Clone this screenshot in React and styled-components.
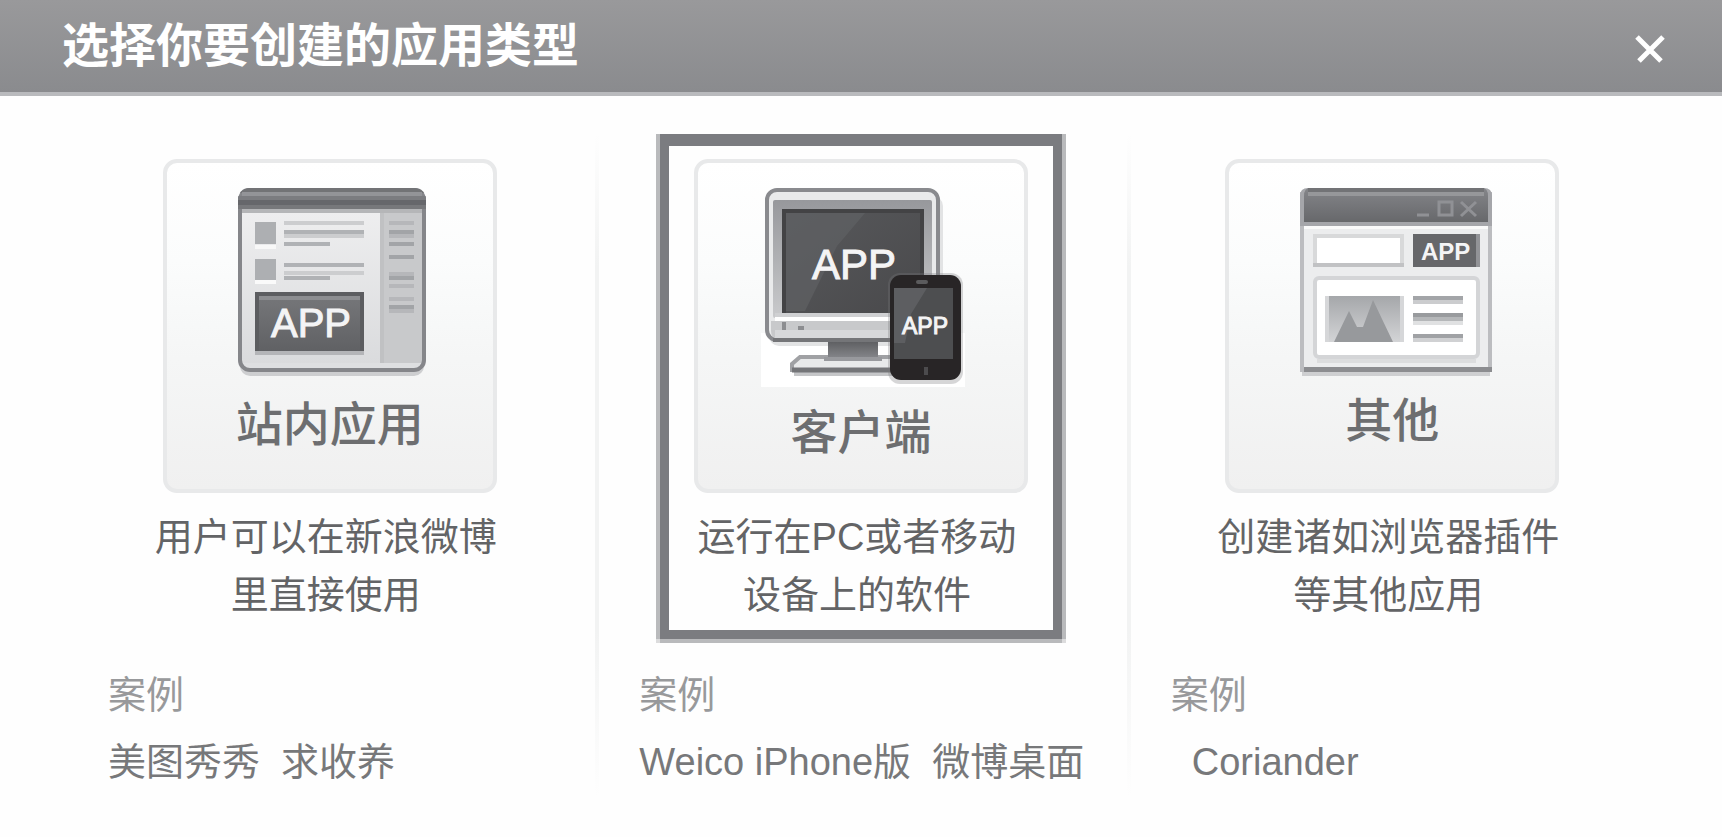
import React, { useState } from "react";
import styled, { createGlobalStyle } from "styled-components";

const GlobalStyle = createGlobalStyle`
  *, *::before, *::after { box-sizing: border-box; }
  body {
    margin: 0;
    background: #fefefe;
    font-family: "Liberation Sans", "Noto Sans CJK SC", sans-serif;
  }
`;

const Dialog = styled.main`
  width: 100%;
`;

const Header = styled.header`
  display: flex;
  align-items: center;
  justify-content: space-between;
  height: 96px;
  padding: 0 57px 0 62px;
  border-bottom: 4px solid #b9babd;
  background: linear-gradient(#99999b, #8a8b8e);
`;

const Title = styled.h1`
  margin: 0;
  color: #ffffff;
  font-size: 47px;
  font-weight: 700;
  line-height: 60px;
  white-space: nowrap;
`;

const CloseButton = styled.button`
  display: flex;
  margin: 4px 0 0;
  padding: 0;
  border: 0;
  background: none;
  cursor: pointer;
`;

const Columns = styled.div`
  display: grid;
  grid-template-columns: repeat(3, minmax(0, 1fr));
  padding: 38px 64px 40px;
`;

const Column = styled.section`
  display: flex;
  flex-direction: column;
  align-items: center;

  & + & {
    background: linear-gradient(#fefefe, #f2f3f3 20%, #f2f3f3 75%, #fefefe) left / 4px 100% no-repeat;
  }
`;

const Choice = styled.button`
  width: 402px;
  margin: 0;
  padding: 13px 0 6px;
  border: 9px solid ${(p) => (p.$selected ? "#7b7c80" : "transparent")};
  border-top-width: 12px;
  background: none;
  box-shadow: ${(p) =>
    p.$selected ? "-4px 0 #b9babc, 4px 0 #b9babc, 0 4px #b9babc, 4px 4px #dcdcdd, -4px 4px #dcdcdd" : "none"};
  font-family: inherit;
  cursor: pointer;
`;

const Card = styled.span`
  display: flex;
  flex-direction: column;
  align-items: center;
  gap: 14px;
  width: 334px;
  height: 334px;
  margin: 0 auto;
  padding-top: 25px;
  border: 4px solid #e8e9ea;
  border-radius: 14px;
  background: linear-gradient(#ffffff, #fbfcfc 30%, #f5f6f6 60%, #f0f0f0);
`;

const CardName = styled.span`
  color: #6d6e70;
  font-size: 47px;
  font-weight: 500;
  line-height: 62px;
`;

const Description = styled.span`
  display: block;
  margin-top: 15px;
  padding-right: 8px;
  color: #636466;
  font-size: 38px;
  line-height: 58px;
  white-space: pre-line;
`;

const Cases = styled.dl`
  align-self: stretch;
  margin: 23px 0 0;
  padding-left: 44px;
  font-size: 38px;
  line-height: 67px;
  white-space: pre;
`;

const CasesLabel = styled.dt`
  color: #98999b;
`;

const CasesText = styled.dd`
  margin: 0;
  color: #77787a;
`;

const IconLabel = styled.text`
  fill: #f4f4f5;
  stroke: #f4f4f5;
  stroke-width: ${(p) => (p.$bold ? 0 : 1)};
  font-family: "Liberation Sans", sans-serif;
  font-size: ${(p) => p.$size}px;
  font-weight: ${(p) => (p.$bold ? 700 : 400)};
`;

function Bars({ x, width, rows }) {
  return rows.map(([y, tone, w]) => (
    <rect key={y} x={x} y={y} width={w || width} height="4" fill={tone} />
  ));
}

function SiteIcon() {
  const d = "#b0b2b5";
  const l = "#cccdcf";
  const s = "#a2a4a7";
  const m = "#b6b7ba";
  return (
    <svg width="208" height="192" viewBox="0 0 208 192" aria-hidden="true">
      <defs>
        <linearGradient id="siteBody" x1="0" y1="0" x2="0" y2="1">
          <stop offset="0" stopColor="#f1f1f2" />
          <stop offset="1" stopColor="#d9dadc" />
        </linearGradient>
        <linearGradient id="siteBtn" x1="0" y1="0" x2="0" y2="1">
          <stop offset="0" stopColor="#77787b" />
          <stop offset="1" stopColor="#606164" />
        </linearGradient>
        <clipPath id="siteClip"><rect x="12" y="0" width="188" height="184" rx="11" /></clipPath>
      </defs>
      <rect x="14" y="6" width="184" height="182" rx="10" fill="#cdced0" />
      <g clipPath="url(#siteClip)">
        <rect x="12" width="188" height="184" fill="url(#siteBody)" />
        <rect x="154" y="20" width="44" height="155" fill="#c8c9cb" />
        <rect x="154" y="20" width="4" height="155" fill="#c0c1c3" />
        <rect x="16" y="175" width="180" height="5" fill="#dedfe1" />
      </g>
      <rect x="14" y="2" width="184" height="180" rx="10" fill="none" stroke="#85868a" strokeWidth="4" />
      <g clipPath="url(#siteClip)">
        <rect x="12" width="188" height="5" fill="#727376" />
        <rect x="16" y="4" width="180" height="5" fill="#939498" />
        <rect x="12" y="8" width="188" height="4" fill="#7b7c80" />
        <rect x="12" y="12" width="188" height="5" fill="#66676b" />
        <rect x="12" y="17" width="188" height="4" fill="#77787b" />
        <rect x="16" y="21" width="180" height="4" fill="#b5b6b8" />
      </g>
      <rect x="29" y="57" width="21" height="4" fill="#f8f8f8" />
      <rect x="29" y="34" width="21" height="22" fill="#adafb2" />
      <rect x="29" y="91" width="21" height="5" fill="#fafafa" />
      <rect x="29" y="71" width="21" height="21" fill="#adafb2" />
      <Bars x={58} width={80} rows={[[33, l], [42, d], [46, l], [54, d, 46], [75, d], [83, l], [88, d, 46]]} />
      <Bars x={163} width={25} rows={[[33, m], [42, s], [46, m], [54, s], [67, s], [84, m], [88, s], [96, m], [109, m], [117, s], [121, m]]} />
      <rect x="29" y="163" width="109" height="4" fill="#b4b5b8" />
      <rect x="29" y="104" width="109" height="59" rx="2" fill="url(#siteBtn)" />
      <rect x="33" y="108" width="101" height="4" fill="#8c8d90" />
      <path d="M31 163V106H136V163" fill="none" stroke="#5c5d60" strokeWidth="4" />
      <IconLabel x="45" y="149" $size={40}>APP</IconLabel>
    </svg>
  );
}

function ClientIcon() {
  return (
    <svg width="208" height="200" viewBox="0 0 208 200" aria-hidden="true">
      <defs>
        <linearGradient id="bezel" x1="0" y1="0" x2="0" y2="1">
          <stop offset="0" stopColor="#97989c" />
          <stop offset="1" stopColor="#c9cacc" />
        </linearGradient>
        <linearGradient id="screen" x1="0" y1="0" x2="1" y2="1">
          <stop offset="0" stopColor="#58595c" />
          <stop offset="1" stopColor="#49494b" />
        </linearGradient>
        <linearGradient id="neck" x1="0" y1="0" x2="0" y2="1">
          <stop offset="0" stopColor="#5f6063" />
          <stop offset="1" stopColor="#85868a" />
        </linearGradient>
      </defs>
      <path d="M4 145H208V199H4Z" fill="#ffffff" />
      <rect x="12" y="8" width="174" height="150" rx="10" fill="#e2e3e4" />
      <rect x="10" y="2" width="171" height="150" rx="10" fill="#e9eaeb" stroke="#898a8e" strokeWidth="4" />
      <rect x="16" y="12" width="159" height="118" rx="2" fill="url(#bezel)" />
      <rect x="25" y="21" width="142" height="104" fill="url(#screen)" />
      <path d="M29 25H108L80 58L48 123H29Z" fill="#606164" opacity="0.7" />
      <path d="M27 125V23H165V125" fill="none" stroke="#434345" strokeWidth="4" />
      <rect x="18" y="125" width="155" height="4" fill="#cfd0d2" />
      <rect x="18" y="129" width="155" height="4" fill="#ffffff" />
      <path d="M14 133H178V150H20Q14 150 14 143Z" fill="#c8c9cb" />
      <rect x="18" y="142" width="150" height="8" fill="#d7d8da" />
      <rect x="16" y="150" width="150" height="4" fill="#747578" />
      <rect x="25" y="134" width="4" height="8" fill="#8c8d90" />
      <rect x="41" y="138" width="6" height="4" fill="#8c8d90" />
      <rect x="37" y="184" width="100" height="4" fill="#c5c6c8" />
      <path d="M43 169H140V182H35V176Z" fill="#e8e9ea" stroke="#a0a1a4" strokeWidth="4" />
      <path d="M35 182H140" stroke="#747578" strokeWidth="5" />
      <rect x="71" y="154" width="50" height="16" fill="url(#neck)" />
      <rect x="67" y="169" width="58" height="4" fill="#98999d" />
      <IconLabel x="55" y="91" $size={42}>APP</IconLabel>
      <rect x="131" y="85" width="75" height="111" rx="12" fill="#77787b" opacity="0.3" />
      <rect x="133" y="87" width="71" height="105" rx="11" fill="#282526" />
      <rect x="137" y="100" width="59" height="71" fill="#4d4e50" />
      <path d="M137 100H170L154 126L148 155H137Z" fill="#5d5e61" />
      <rect x="159" y="92" width="12" height="4" rx="2" fill="#5b5b5d" />
      <rect x="167" y="179" width="4" height="8" fill="#4c4b4d" />
      <IconLabel x="145" y="146" $size={23}>APP</IconLabel>
    </svg>
  );
}

function BrowserIcon() {
  return (
    <svg width="208" height="188" viewBox="0 0 208 188" aria-hidden="true">
      <defs>
        <linearGradient id="bar" x1="0" y1="0" x2="0" y2="1">
          <stop offset="0" stopColor="#848589" />
          <stop offset="1" stopColor="#67686b" />
        </linearGradient>
        <linearGradient id="sky" x1="0" y1="0" x2="0" y2="1">
          <stop offset="0" stopColor="#a5a7aa" />
          <stop offset="1" stopColor="#d3d4d6" />
        </linearGradient>
      </defs>
      <rect x="14" y="180" width="188" height="8" fill="#cecfd1" />
      <rect x="14" y="6" width="188" height="176" fill="#ecedee" stroke="#bcbdc0" strokeWidth="4" />
      <path d="M12 38V8Q12 0 20 0H196Q204 0 204 8V38Z" fill="#a5a6aa" />
      <path d="M16 34V8Q16 0 22 0H194Q200 0 200 8V34Z" fill="url(#bar)" />
      <rect x="20" y="0" width="176" height="4" fill="#727376" />
      <rect x="20" y="4" width="176" height="4" fill="#96979a" />
      <rect x="16" y="38" width="184" height="3" fill="#fafafa" />
      <g fill="none" stroke="#909195" strokeWidth="3">
        <path d="M129 27H141M173 14L188 28M188 14L173 28" />
        <rect x="151" y="14" width="13" height="13" />
      </g>
      <rect x="27" y="48" width="87" height="29" fill="#ffffff" stroke="#d8d9da" strokeWidth="4" />
      <path d="M25 77H116" stroke="#c1c2c4" strokeWidth="4" />
      <rect x="125" y="46" width="67" height="33" fill="#929397" />
      <rect x="125" y="46" width="63" height="33" fill="#66676a" />
      <IconLabel x="133" y="72" $size={24} $bold>APP</IconLabel>
      <rect x="27" y="90" width="163" height="79" rx="4" fill="#ffffff" stroke="#d4d5d7" strokeWidth="4" />
      <rect x="29" y="171" width="159" height="4" fill="#dcddde" />
      <rect x="37" y="108" width="79" height="46" fill="#d6d7d9" />
      <rect x="41" y="108" width="71" height="46" fill="url(#sky)" />
      <path d="M46 154L61 123L69 139H75L85 112L94 131L105 154Z" fill="#97999c" />
      <Bars x={125} width={50} rows={[[108, "#a3a5a8"], [112, "#cbccce"], [125, "#999b9e"], [129, "#b5b7b9"], [133, "#e0e1e2"], [146, "#a0a2a5"], [150, "#d0d1d3"]]} />
      <rect x="16" y="179" width="188" height="5" fill="#8c8d90" />
    </svg>
  );
}

function CloseIcon() {
  return (
    <svg width="30" height="30" viewBox="0 0 30 30" aria-hidden="true">
      <path d="M2 4L26 28M28 4L4 28" stroke="#ffffff" strokeWidth="5" />
    </svg>
  );
}

const appTypes = [
  {
    id: "site",
    name: "站内应用",
    Icon: SiteIcon,
    description: "用户可以在新浪微博\n里直接使用",
    cases: "美图秀秀  求收养",
  },
  {
    id: "client",
    name: "客户端",
    Icon: ClientIcon,
    description: "运行在PC或者移动\n设备上的软件",
    cases: "Weico iPhone版  微博桌面",
  },
  {
    id: "other",
    name: "其他",
    Icon: BrowserIcon,
    description: "创建诸如浏览器插件\n等其他应用",
    cases: "  Coriander",
  },
];

export default function App() {
  const [selected, setSelected] = useState("client");
  return (
    <>
      <GlobalStyle />
      <Dialog>
        <Header>
          <Title>选择你要创建的应用类型</Title>
          <CloseButton type="button" aria-label="关闭">
            <CloseIcon />
          </CloseButton>
        </Header>
        <Columns>
          {appTypes.map(({ id, name, Icon, description, cases }) => (
            <Column key={id}>
              <Choice
                type="button"
                $selected={selected === id}
                aria-pressed={selected === id}
                onClick={() => setSelected(id)}
              >
                <Card>
                  <Icon />
                  <CardName>{name}</CardName>
                </Card>
                <Description>{description}</Description>
              </Choice>
              <Cases>
                <CasesLabel>案例</CasesLabel>
                <CasesText>{cases}</CasesText>
              </Cases>
            </Column>
          ))}
        </Columns>
      </Dialog>
    </>
  );
}
